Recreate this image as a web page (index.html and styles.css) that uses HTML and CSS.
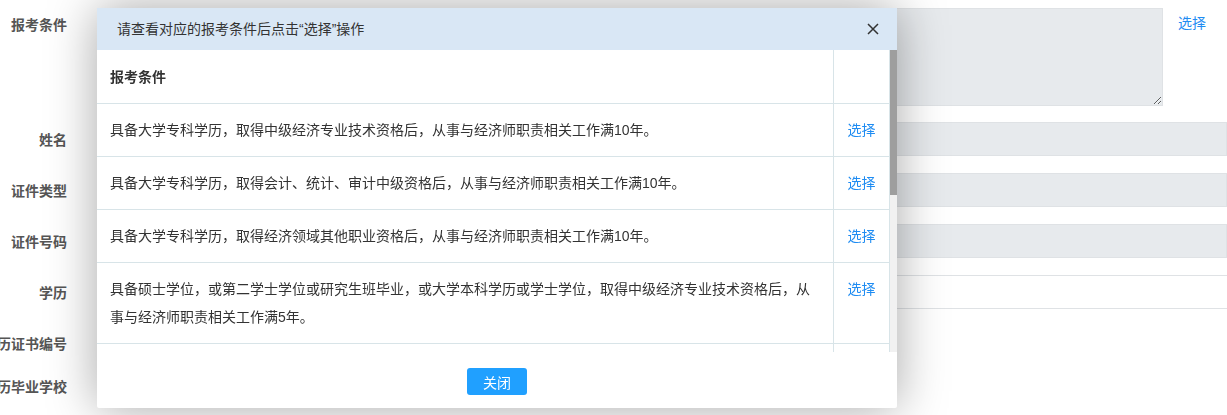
FILE: index.html
```html
<!DOCTYPE html>
<html lang="zh-CN">
<head>
  <meta charset="UTF-8" />
  <title>报考条件选择</title>
  <link rel="stylesheet" href="styles.css">
</head>
<body>

<!-- 背景中的报名表单 -->
<div class="form">
  <div class="form-row row-area">
    <div class="form-label label-top"><span>报考条件</span></div>
    <textarea class="form-area" readonly></textarea>
    <div class="form-action"><a href="#">选择</a></div>
  </div>
  <div class="form-row">
    <div class="form-label"><span>姓名</span></div>
    <div class="form-input"></div>
  </div>
  <div class="form-row">
    <div class="form-label"><span>证件类型</span></div>
    <div class="form-input"></div>
  </div>
  <div class="form-row">
    <div class="form-label"><span>证件号码</span></div>
    <div class="form-input"></div>
  </div>
  <div class="form-row">
    <div class="form-label"><span>学历</span></div>
    <div class="form-input form-select"></div>
  </div>
  <div class="form-row row-short">
    <div class="form-label"><span>学历证书编号</span></div>
    <div class="form-empty"></div>
  </div>
  <div class="form-row">
    <div class="form-label"><span>学历毕业学校</span></div>
    <div class="form-empty"></div>
  </div>
</div>

<!-- 弹出层 -->
<div class="dialog">
  <div class="dialog-header">
    <span class="dialog-title">请查看对应的报考条件后点击“选择”操作</span>
    <span class="dialog-close">
      <svg width="12" height="12" viewBox="0 0 12 12">
        <path d="M1 1 L11 11 M11 1 L1 11" stroke="#333" stroke-width="1.5" fill="none"/>
      </svg>
    </span>
  </div>

  <div class="dialog-body">
    <div class="dialog-scroll">
      <table class="cond-table">
        <thead>
          <tr><th>报考条件</th><th class="col-op"></th></tr>
        </thead>
        <tbody>
          <tr><td>具备大学专科学历，取得中级经济专业技术资格后，从事与经济师职责相关工作满10年。</td><td class="col-op"><a href="#">选择</a></td></tr>
          <tr><td>具备大学专科学历，取得会计、统计、审计中级资格后，从事与经济师职责相关工作满10年。</td><td class="col-op"><a href="#">选择</a></td></tr>
          <tr><td>具备大学专科学历，取得经济领域其他职业资格后，从事与经济师职责相关工作满10年。</td><td class="col-op"><a href="#">选择</a></td></tr>
          <tr><td>具备硕士学位，或第二学士学位或研究生班毕业，或大学本科学历或学士学位，取得中级经济专业技术资格后，从事与经济师职责相关工作满5年。</td><td class="col-op"><a href="#">选择</a></td></tr>
          <tr><td>具备硕士学位，或第二学士学位或研究生班毕业，或大学本科学历或学士学位，取得会计、统计、审计中级资格后，从事与经济师职责相关工作满5年。</td><td class="col-op"><a href="#">选择</a></td></tr>
          <tr><td>具备大学本科学历或学士学位，取得经济领域其他职业资格后，从事与经济师职责相关工作满5年。</td><td class="col-op"><a href="#">选择</a></td></tr>
        </tbody>
      </table>
    </div>
    <!-- Scrollbalken, wie im Original-Browser -->
    <div class="scrollbar"><div class="scrollbar-thumb"></div></div>
  </div>

  <div class="dialog-footer">
    <button class="btn-close">关闭</button>
  </div>
</div>

</body>
</html>
```

FILE: styles.css
```css
body {
  margin: 0;
  padding: 8px 0 0 0;
  font-family: "Liberation Sans", "Noto Sans CJK SC", sans-serif;
  font-size: 14px;
  color: #333;
  background: #fff;
  overflow: hidden;
}
a {
  color: #1f8cf2;
  text-decoration: none;
}

/* --- 背景表单 --- */
.form-row {
  display: flex;
  height: 34px;
  margin-bottom: 17px;
}
.row-area {
  height: 98px;
  margin-bottom: 16px;
}
.row-short {
  margin-bottom: 9px;
}
.form-label {
  flex: none;
  width: 67px;
  display: flex;
  justify-content: flex-end;
  align-items: center;
  white-space: nowrap;
  font-weight: bold;
  color: #555;
  margin-right: 60px;
}
.label-top {
  align-items: flex-start;
  padding-top: 7px;
  line-height: 20px;
}
.form-area {
  flex: 1;
  box-sizing: border-box;
  height: 98px;
  margin: 0;
  background: #e7eaed;
  border: 1px solid #dfe2e5;
  border-radius: 0;
  resize: vertical;
}
.form-action {
  flex: none;
  width: 49px;
  padding: 5px 0 0 15px;
  line-height: 20px;
}
.form-input {
  flex: 1;
  box-sizing: border-box;
  background: #e7eaed;
  border: 1px solid #dfe2e5;
}
.form-select {
  background: #fff;
  border-left: none;
  border-right: none;
}
.form-empty {
  flex: 1;
}

/* --- 弹出层 --- */
.dialog {
  position: fixed;
  left: 97px;
  top: 8px;
  width: 800px;
  height: 400px;
  background: #fff;
  border-radius: 2px;
  box-shadow: 0 0 50px rgba(0,0,0,0.35);
  display: flex;
  flex-direction: column;
  z-index: 100;
}
.dialog-header {
  flex: none;
  height: 42px;
  background: #d9e7f5;
  display: flex;
  align-items: center;
  justify-content: space-between;
  padding: 0 18px 0 20px;
}
.dialog-title {
  color: #333;
  line-height: 20px;
}
.dialog-close {
  display: flex;
  cursor: pointer;
}
.dialog-body {
  flex: none;
  height: 302px;
  display: flex;
}
.dialog-scroll {
  flex: 1;
  overflow: hidden;
}
.scrollbar {
  flex: none;
  width: 7px;
  background: #f1f1f1;
}
.scrollbar-thumb {
  height: 145px;
  background: #9e9e9e;
}
.cond-table {
  width: 100%;
  border-collapse: collapse;
  table-layout: fixed;
  border-right: 1px solid #d8e4e8;
}
.cond-table th,
.cond-table td {
  padding: 12px 14px 12px 13px;
  line-height: 28px;
  text-align: left;
  vertical-align: top;
  border-bottom: 1px solid #d8e4e8;
  color: #333;
}
.cond-table th {
  padding-top: 13px;
  font-weight: bold;
}
.cond-table .col-op {
  width: 56px;
  box-sizing: border-box;
  padding-left: 0;
  padding-right: 0;
  text-align: center;
  border-left: 1px solid #d8e4e8;
}
.dialog-footer {
  flex: 1;
  padding-top: 16px;
  text-align: center;
}
.btn-close {
  width: 60px;
  height: 27px;
  border: none;
  border-radius: 3px;
  background: #20a0ff;
  color: #fff;
  font-family: inherit;
  font-size: 14px;
  cursor: pointer;
}
```
